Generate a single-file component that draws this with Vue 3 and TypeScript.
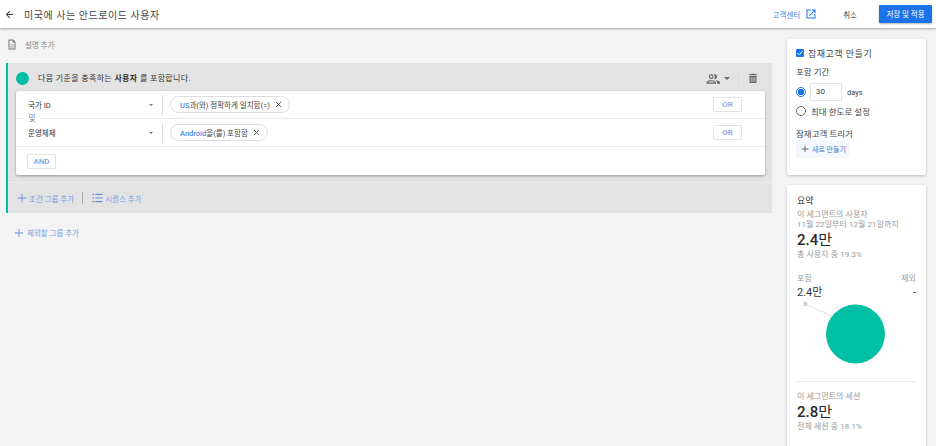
<script setup lang="ts">
interface Condition {
  label: string
  value: string
  rest: string
}
const conditions: Condition[] = [
  { label: '국가 ID', value: 'US', rest: '과(와) 정확하게 일치함(=)' },
  { label: '운영체제', value: 'Android', rest: '을(를) 포함함' },
]
</script>

<template>
  <div class="page">
    <header class="topbar">
      <svg class="back" viewBox="0 0 24 24" width="11" height="11"><path d="M20 11H7.8l5.6-5.6L12 4l-8 8 8 8 1.400-1.400L7.800 13H20z" fill="#333" /></svg>
      <h1 class="title">미국에 사는 안드로이드 사용자</h1>
      <a class="help">고객센터
        <svg viewBox="0 0 24 24" width="12" height="12"><path d="M19 19H5V5h7V3H3v18h18v-9h-2zM14 3v2h3.600l-9.800 9.800 1.400 1.400L19 6.400V10h2V3z" fill="#1a73e8" /></svg>
      </a>
      <span class="cancel">취소</span>
      <button class="save">저장 및 적용</button>
    </header>

    <div class="body">
      <main class="left">
        <div class="desc">
          <svg viewBox="0 0 24 24" width="12" height="13"><path d="M14 2H5v20h14V7zm3 18H7V4h6v4h4zM9 12h6v1.500H9zm0 4h6v1.500H9z" fill="#777" /></svg>
          <span>설명 추가</span>
        </div>

        <section class="group">
          <div class="group-head">
            <span class="dot"></span>
            <span class="lead">다음 기준을 충족하는 <b>사용자</b> 를 포함합니다.</span>
            <svg class="people" viewBox="0 0 24 24" width="14" height="14"><path d="M9 12a4 4 0 1 0 0-8 4 4 0 0 0 0 8zm0-6a2 2 0 1 1 0 4 2 2 0 0 1 0-4zm0 8c-3 0-8 1.300-8 4v2h16v-2c0-2.700-5-4-8-4zm-6 4c.3-.9 3.400-2 6-2s5.700 1.100 6 2zm12-6a4 4 0 0 0 0-8c-.5 0-.9.100-1.300.2a6 6 0 0 1 0 7.600c.4.100.8.200 1.300.2zm1.500 2.100c1.400.9 2.500 2.100 2.500 3.900v2h5v-2c0-2.500-4.200-3.600-7.500-3.900z" fill="#666" /></svg>
            <span class="caret"></span>
            <span class="vline"></span>
            <svg class="trash" viewBox="0 0 24 24" width="12" height="13"><path d="M15.500 3.500l-1-1h-5l-1 1H4v2h16v-2zM5 7v14h14V7zm4 11.500H7.500v-9H9zm3.800 0h-1.600v-9h1.600zm3.700 0H15v-9h1.500z" fill="#666" /></svg>
          </div>

          <div class="card">
            <template v-for="(c, i) in conditions" :key="c.label">
              <div class="row">
                <div class="field"><span>{{ c.label }}</span><i class="mini-caret"></i></div>
                <div class="chip-cell">
                  <span class="chip"><span><em>{{ c.value }}</em>{{ c.rest }}</span>
                    <svg viewBox="0 0 24 24" width="9" height="9"><path d="M5 5l14 14M19 5L5 19" stroke="#555" stroke-width="2.600" fill="none" /></svg>
                  </span>
                </div>
                <button class="small-btn or">OR</button>
              </div>
              <div v-if="i === 0" class="and-label"><span>및</span></div>
            </template>
            <div class="card-foot"><button class="small-btn">AND</button></div>
          </div>

          <div class="group-foot">
            <span class="link">
              <svg viewBox="0 0 12 12" width="10" height="10"><path d="M5.500 1h1v4.500H11v1H6.500V11h-1V6.500H1v-1h4.500z" fill="#5f8fe0" /></svg>
              조건 그룹 추가
            </span>
            <span class="foot-sep"></span>
            <span class="link">
              <svg viewBox="0 0 12 12" width="11" height="10"><path d="M0 1h2v1.400H0zM0 5.300h2v1.400H0zM0 9.600h2V11H0zM3.500 1H12v1.400H3.500zM3.500 5.300H12v1.400H3.500zM3.500 9.600H12V11H3.500z" fill="#5f8fe0" /></svg>
              시퀀스 추가
            </span>
          </div>
        </section>

        <div class="exclude link">
          <svg viewBox="0 0 12 12" width="10" height="10"><path d="M5.500 1h1v4.500H11v1H6.500V11h-1V6.500H1v-1h4.500z" fill="#5f8fe0" /></svg>
          제외할 그룹 추가
        </div>
      </main>

      <aside class="side">
        <div class="panel audience">
          <label class="check-line"><span class="checkbox"><svg viewBox="0 0 12 12" width="8" height="8"><path d="M2 6l3 3 5-6" stroke="#fff" stroke-width="1.400" fill="none" /></svg></span>잠재고객 만들기</label>
          <div class="sub">포함 기간</div>
          <div class="radio-line">
            <span class="radio on"></span>
            <span class="days-input">30</span>
            <span class="days">days</span>
          </div>
          <div class="radio-line second">
            <span class="radio"></span>
            <span class="max">최대 한도로 설정</span>
          </div>
          <div class="sub trigger">잠재고객 트리거</div>
          <span class="new-btn">
            <svg viewBox="0 0 12 12" width="8" height="8"><path d="M5.300 1h1.400v4.300H11v1.400H6.700V11H5.300V6.700H1V5.300h4.300z" fill="#666" /></svg>
            새로 만들기
          </span>
        </div>

        <div class="panel summary">
          <div class="sum-title">요약</div>
          <div class="muted">이 세그먼트의 사용자</div>
          <div class="muted">11월 22일부터 12월 21일까지</div>
          <div class="big">2.4<span class="unit">만</span></div>
          <div class="muted">총 사용자 중 19.3%</div>
          <div class="split">
            <div>
              <div class="muted">포함</div>
              <div class="mid">2.4만</div>
            </div>
            <div class="right">
              <div class="muted">제외</div>
              <div class="mid">-</div>
            </div>
          </div>
          <div class="chart">
            <svg viewBox="0 0 124 76" width="124" height="76">
              <circle cx="9.500" cy="3" r="2.200" fill="#ccc" />
              <path d="M9.500 3L36 15" stroke="#e2e2e2" stroke-width="1" />
              <circle cx="59.500" cy="33" r="29.500" fill="#00bfa5" />
            </svg>
          </div>
          <div class="divider"></div>
          <div class="muted">이 세그먼트의 세션</div>
          <div class="big">2.8<span class="unit">만</span></div>
          <div class="muted">전체 세션 중 18.1%</div>
        </div>
      </aside>
    </div>
  </div>
</template>

<style scoped>
.page {
  width: 936px;
  height: 446px;
  overflow: hidden;
  background: #f3f3f3;
  font-family: Roboto, "Noto Sans CJK KR", sans-serif;
  color: #3c4043;
  display: flex;
  flex-direction: column;
}
.topbar {
  height: 28px;
  flex: none;
  box-sizing: border-box;
  background: #fff;
  box-shadow: 0 1px 2px rgba(0, 0, 0, .35);
  display: flex;
  align-items: center;
  padding: 0 0 0 4px;
  position: relative;
  z-index: 1;
}
.back { margin-right: 9px; }
.title {
  margin: 0;
  font-size: 10px;
  font-weight: 400;
  letter-spacing: .55px;
  color: #444;
  flex: 1;
}
.help {
  display: flex;
  align-items: center;
  gap: 5px;
  font-size: 7.500px;
  color: #4a86e8;
}
.cancel { font-size: 7.500px; margin-left: 26px; color: #444; }
.save {
  margin: 0 4px 1px 22px;
  width: 53px;
  height: 18px;
  border: 0;
  border-radius: 1px;
  background: #1a73e8;
  color: #fff;
  font: inherit;
  font-size: 7.500px;
  padding: 0;
  box-shadow: 0 1px 2px rgba(0, 0, 0, .3);
}
.body { flex: 1; display: flex; min-height: 0; }
.left { width: 772px; flex: none; padding-left: 6px; box-sizing: border-box; }
.desc {
  height: 35px;
  display: flex;
  align-items: center;
  gap: 7px;
  font-size: 7.500px;
  color: #888;
  padding-bottom: 2px;
  box-sizing: border-box;
}
.group {
  background: #e3e3e3;
  border-left: 2px solid #00bfa5;
  height: 150px;
  box-sizing: border-box;
  display: flex;
  flex-direction: column;
}
.group-head {
  height: 28px;
  flex: none;
  display: flex;
  align-items: center;
  padding: 3px 13px 0 8px;
  box-sizing: border-box;
  font-size: 8px;
}
.dot { width: 13px; height: 13px; border-radius: 50%; background: #00bfa5; }
.lead { margin: 0 0 2px 9px; flex: 1; color: #333; letter-spacing: .35px; }
.lead b { font-weight: 700; }
.people { margin-right: 2px; }
.caret {
  border-left: 3px solid transparent;
  border-right: 3px solid transparent;
  border-top: 3px solid #666;
  margin-left: 2px;
}
.vline { width: 1px; height: 15px; background: #dcdcdc; margin: 0 8px 0 8px; }
.card {
  margin: 0 7px 0 8px;
  width: 749px;
  height: 84px;
  flex: none;
  background: #fff;
  border-radius: 2px;
  box-shadow: 0 1px 3px rgba(0, 0, 0, .35);
  box-sizing: border-box;
  position: relative;
}
.row {
  height: 28px;
  display: flex;
  align-items: center;
  border-bottom: 1px solid #e8e8e8;
  box-sizing: border-box;
  position: relative;
}
.field {
  width: 147px;
  height: 20px;
  flex: none;
  box-sizing: border-box;
  border-right: 1px solid #ddd;
  padding: 0 9px 0 12px;
  display: flex;
  align-items: center;
  justify-content: space-between;
  font-size: 7.500px;
  color: #333;
}
.mini-caret {
  border-left: 2px solid transparent;
  border-right: 2px solid transparent;
  border-top: 2px solid #777;
}
.chip-cell { flex: 1; padding-left: 7px; display: flex; align-items: center; }
.chip {
  display: inline-flex;
  align-items: center;
  gap: 4px;
  height: 17px;
  box-sizing: border-box;
  border: 1px solid #ddd;
  border-radius: 9px;
  padding: 0 6px 0 9px;
  font-size: 7.500px;
  color: #444;
}
.chip em { font-style: normal; font-weight: 500; color: #4f84dc; }
.small-btn {
  width: 29px;
  height: 15px;
  padding: 0;
  border: 1px solid #e3e3e3;
  border-radius: 1px;
  background: #fff;
  color: #7a9ff0;
  font: inherit;
  font-size: 8px;
  font-weight: 500;
}
.or { margin-right: 23px; }
.and-label {
  position: absolute;
  top: 22px;
  left: 7px;
  width: 18px;
  text-align: center;
  background: #fff;
  font-size: 7.500px;
  line-height: 12px;
  color: #777;
  z-index: 1;
}
.card-foot { padding: 7px 0 0 11px; display: flex; }
.group-foot {
  flex: 1;
  margin-top: 7px;
  border-top: 1px solid #eee;
  display: flex;
  align-items: center;
  padding-left: 9px;
  font-size: 7.500px;
}
.link {
  display: inline-flex;
  align-items: center;
  gap: 3px;
  color: #7d9fe3;
  font-size: 7.500px;
}
.group-foot .link { gap: 2px; }
.foot-sep { width: 1px; height: 12px; background: #aaa; margin: 0 9px 0 8px; }
.exclude { margin: 14px 0 0 8px; }
.side {
  margin-left: 15px;
  width: 139px;
  flex: none;
  padding-top: 11px;
  display: flex;
  flex-direction: column;
  gap: 10px;
}
.panel {
  background: #fff;
  border-radius: 2px;
  box-shadow: 0 1px 3px rgba(0, 0, 0, .22);
  box-sizing: border-box;
  padding: 0 9px;
  flex: none;
}
.audience { height: 136px; padding-top: 7px; font-size: 8.500px; color: #444; }
.check-line { display: flex; align-items: center; gap: 4px; height: 14px; font-size: 9px; letter-spacing: .5px; }
.checkbox {
  width: 8px;
  height: 8px;
  background: #1a73e8;
  display: flex;
  align-items: center;
  justify-content: center;
  border-radius: 1px;
}
.sub { margin-top: 6px; line-height: 12px; font-size: 8.500px; }
.radio-line { display: flex; align-items: center; margin-top: 5px; height: 18px; }
.radio-line.second { margin-top: 1px; }
.radio {
  width: 10px;
  height: 10px;
  box-sizing: border-box;
  border: 1px solid #666;
  border-radius: 50%;
}
.radio.on { border-color: #1a73e8; background: radial-gradient(circle, #1a73e8 0 3px, #fff 3.500px); }
.days-input {
  margin-left: 4px;
  width: 32px;
  height: 18px;
  box-sizing: border-box;
  border: 1px solid #e5e5e5;
  padding: 0 5px;
  line-height: 16px;
  font-size: 8px;
}
.days { margin-left: 5px; font-size: 7.500px; }
.max { margin-left: 5px; font-size: 8.500px; }
.sub.trigger { margin-top: 8px; }
.new-btn {
  display: flex;
  width: fit-content;
  align-items: center;
  gap: 3px;
  height: 18px;
  padding: 0 4px 0 5px;
  background: #f3f7fe;
  font-size: 7px;
  color: #4f7fd0;
}
.summary { height: 270px; padding: 9px 10px 0; }
.sum-title { font-size: 9px; color: #333; line-height: 14px; margin-bottom: 2px; }
.muted { font-size: 8px; line-height: 10px; color: #9a9a9a; white-space: nowrap; letter-spacing: .05px; }
.big { font-size: 15px; font-weight: 500; line-height: 18px; margin-top: 1px; color: #2b2b2b; }
.unit { font-weight: 400; }
.big + .muted { margin-top: 1px; }
.split { display: flex; justify-content: space-between; margin-top: 14px; }
.right { text-align: right; }
.mid { font-size: 11px; line-height: 14px; color: #333; margin-top: 2px; }
.chart { height: 64px; margin: 1px 0 16px -1px; }
.divider { height: 1px; background: #e8e8e8; margin-bottom: 10px; }
</style>

<style>
html, body { margin: 0; background: #f3f3f3; }
</style>
